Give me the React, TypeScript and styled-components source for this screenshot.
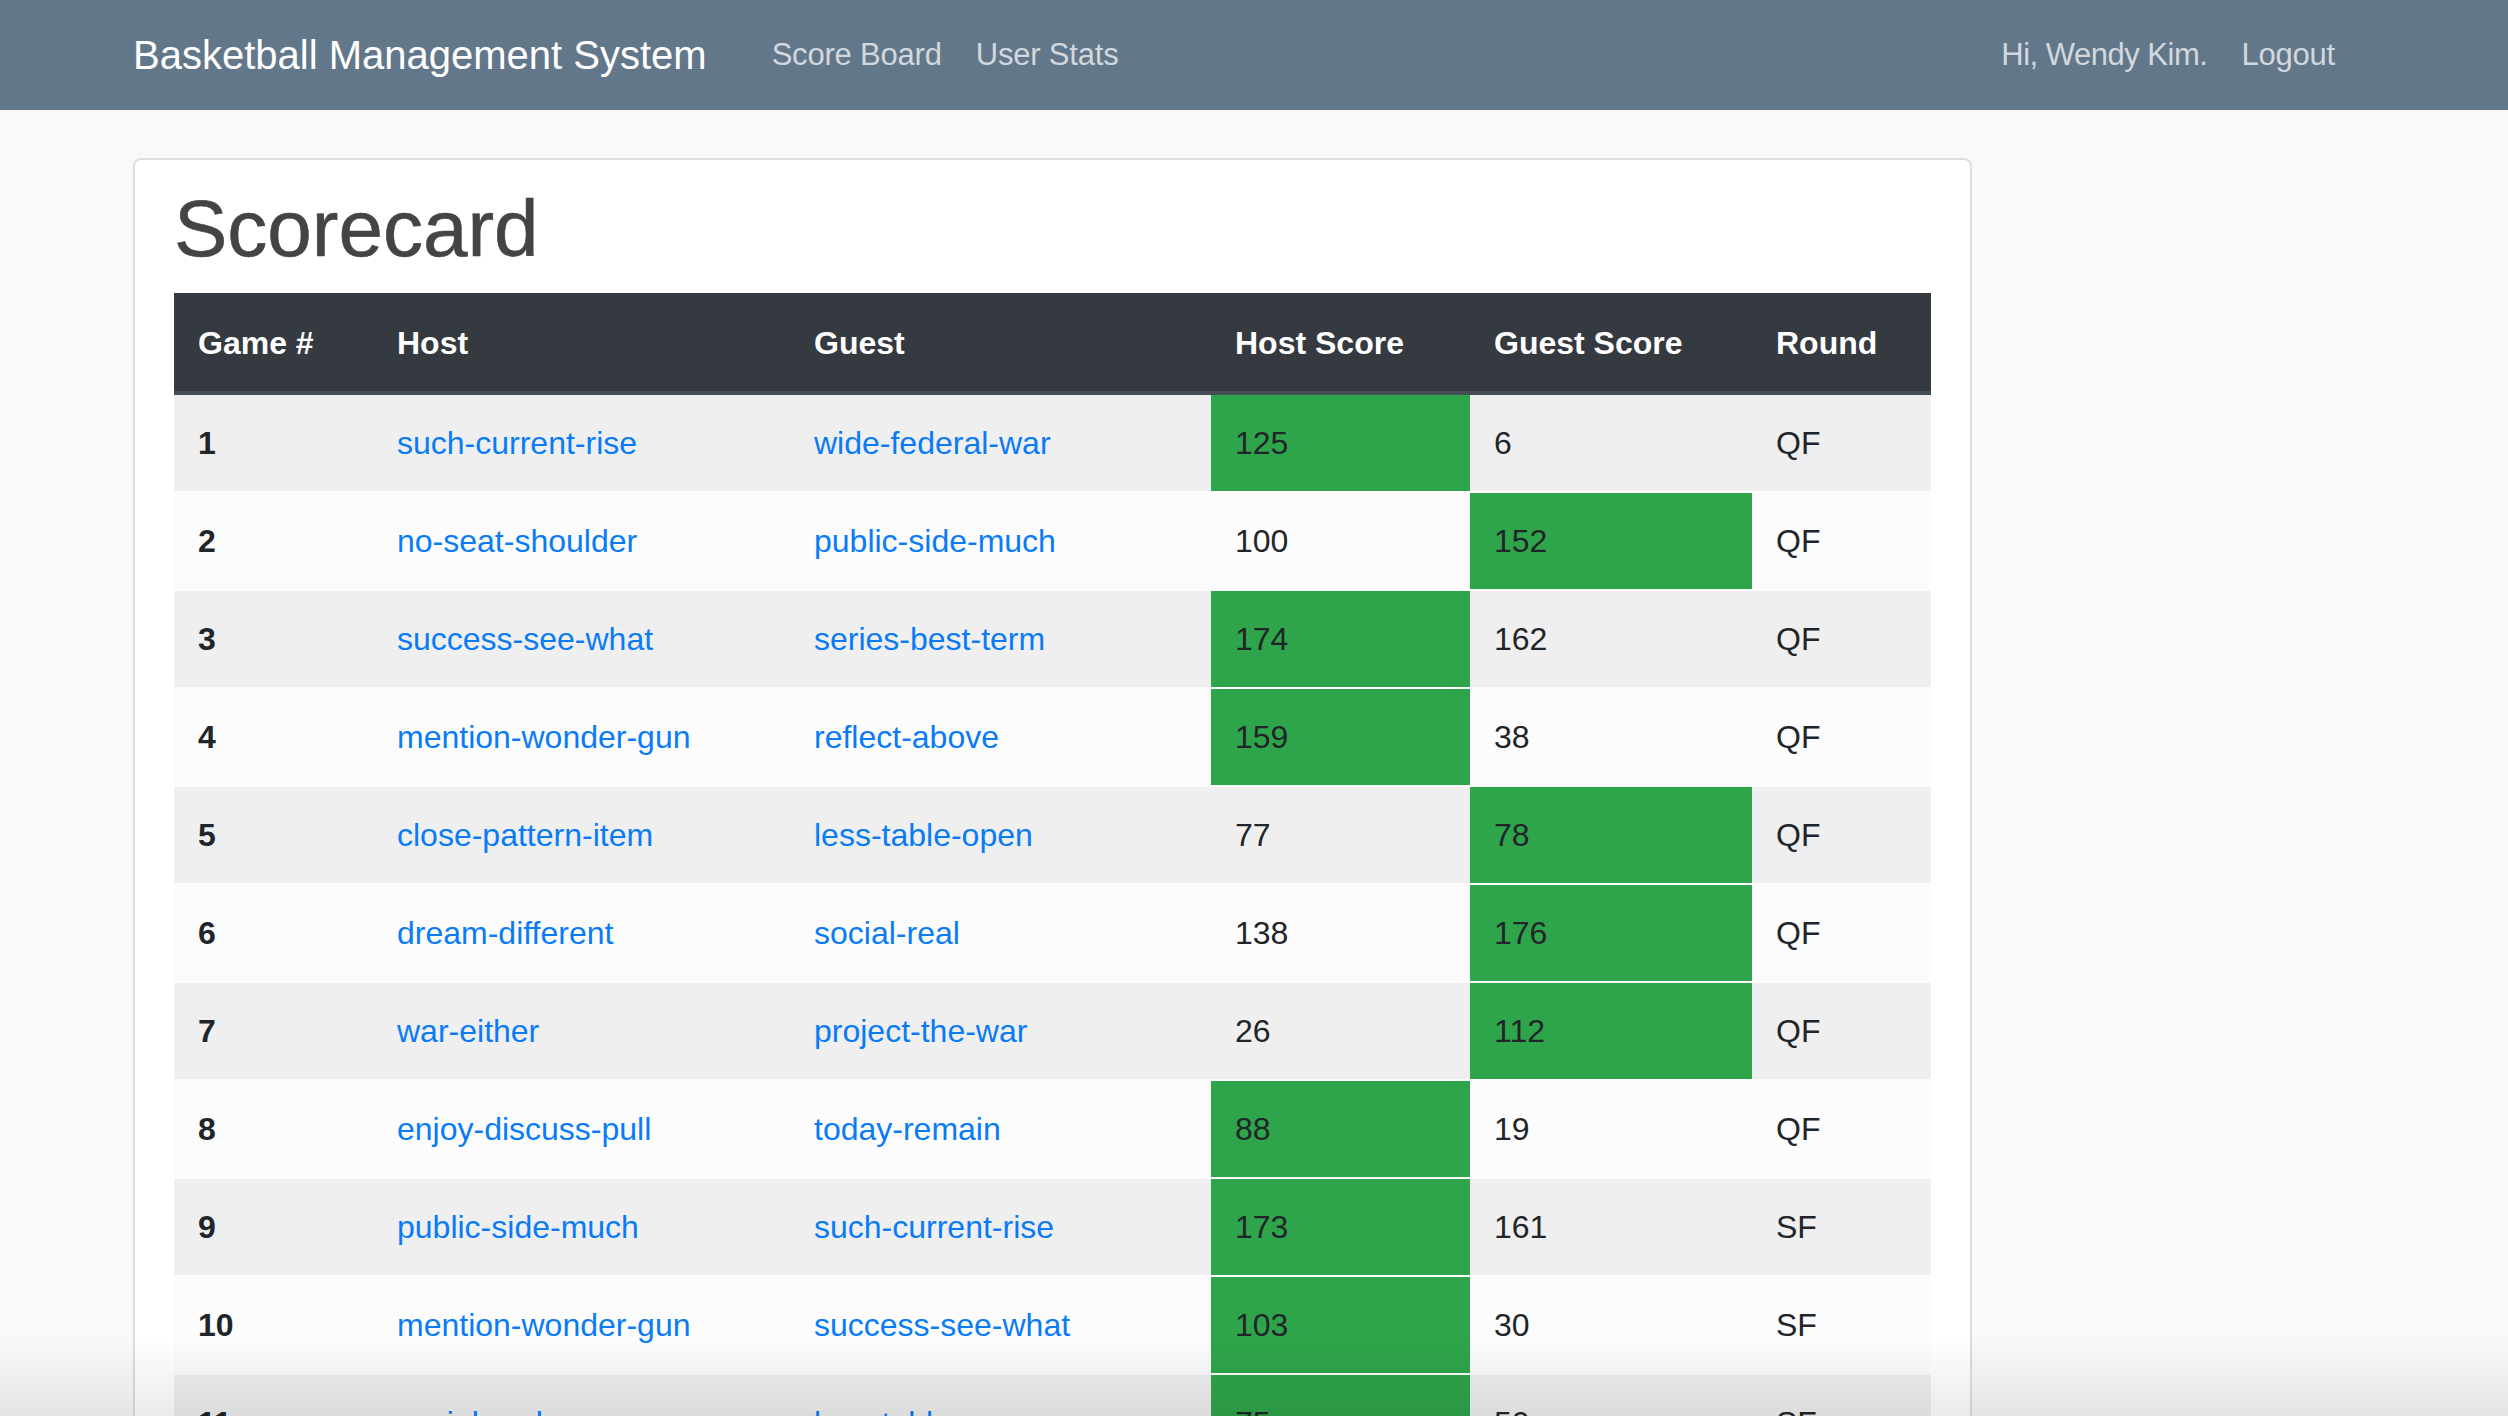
import styled, { createGlobalStyle } from "styled-components";

type Game = {
  id: number;
  host: string;
  guest: string;
  hostScore: number;
  guestScore: number;
  round: string;
};

const games: Game[] = [
  { id: 1, host: "such-current-rise", guest: "wide-federal-war", hostScore: 125, guestScore: 6, round: "QF" },
  { id: 2, host: "no-seat-shoulder", guest: "public-side-much", hostScore: 100, guestScore: 152, round: "QF" },
  { id: 3, host: "success-see-what", guest: "series-best-term", hostScore: 174, guestScore: 162, round: "QF" },
  { id: 4, host: "mention-wonder-gun", guest: "reflect-above", hostScore: 159, guestScore: 38, round: "QF" },
  { id: 5, host: "close-pattern-item", guest: "less-table-open", hostScore: 77, guestScore: 78, round: "QF" },
  { id: 6, host: "dream-different", guest: "social-real", hostScore: 138, guestScore: 176, round: "QF" },
  { id: 7, host: "war-either", guest: "project-the-war", hostScore: 26, guestScore: 112, round: "QF" },
  { id: 8, host: "enjoy-discuss-pull", guest: "today-remain", hostScore: 88, guestScore: 19, round: "QF" },
  { id: 9, host: "public-side-much", guest: "such-current-rise", hostScore: 173, guestScore: 161, round: "SF" },
  { id: 10, host: "mention-wonder-gun", guest: "success-see-what", hostScore: 103, guestScore: 30, round: "SF" },
  { id: 11, host: "social-real", guest: "less-table-open", hostScore: 75, guestScore: 50, round: "SF" },
];

const columns = [
  { label: "Game #", width: 199 },
  { label: "Host", width: 417 },
  { label: "Guest", width: 421 },
  { label: "Host Score", width: 259 },
  { label: "Guest Score", width: 282 },
  { label: "Round", width: 179 },
];

export default function App() {
  return (
    <>
      <GlobalStyle />
      <NavBar>
        <NavLeft>
          <Brand href="#">Basketball Management System</Brand>
          <NavLink href="#">Score Board</NavLink>
          <NavLink href="#">User Stats</NavLink>
        </NavLeft>
        <NavRight>
          <NavText>Hi, Wendy Kim.</NavText>
          <NavLink href="#">Logout</NavLink>
        </NavRight>
      </NavBar>

      <Main>
        <Card>
          <Title>Scorecard</Title>
          <Table>
            <colgroup>
              {columns.map((c) => (
                <col key={c.label} style={{ width: c.width }} />
              ))}
            </colgroup>
            <thead>
              <tr>
                {columns.map((c) => (
                  <HeadCell key={c.label}>{c.label}</HeadCell>
                ))}
              </tr>
            </thead>
            <tbody>
              {games.map((g, i) => (
                <Row key={g.id} $odd={i % 2 === 0}>
                  <NumCell>{g.id}</NumCell>
                  <Cell>
                    <TeamLink href="#">{g.host}</TeamLink>
                  </Cell>
                  <Cell>
                    <TeamLink href="#">{g.guest}</TeamLink>
                  </Cell>
                  <Cell $win={g.hostScore > g.guestScore}>{g.hostScore}</Cell>
                  <Cell $win={g.guestScore > g.hostScore}>{g.guestScore}</Cell>
                  <Cell>{g.round}</Cell>
                </Row>
              ))}
            </tbody>
          </Table>
        </Card>
      </Main>
      <BottomFade />
    </>
  );
}

const GlobalStyle = createGlobalStyle`
  html, body {
    margin: 0;
    padding: 0;
    background: #f9f9f9;
    font-family: "Liberation Sans", Arial, sans-serif;
    color: #212529;
  }
  * {
    box-sizing: border-box;
  }
`;

const NavBar = styled.nav`
  height: 110px;
  background: #627789;
  display: flex;
  align-items: center;
  justify-content: space-between;
  padding: 0 156px 0 133px;
`;

const NavLeft = styled.div`
  display: flex;
  align-items: center;
`;

const NavRight = styled.div`
  display: flex;
  align-items: center;
`;

const Brand = styled.a`
  color: #fff;
  font-size: 40px;
  text-decoration: none;
  margin-right: 48px;
  line-height: 60px;
`;

const NavLink = styled.a`
  color: rgba(255, 255, 255, 0.72);
  font-size: 31px;
  letter-spacing: -0.2px;
  text-decoration: none;
  padding: 0 17px;
  line-height: 48px;
`;

const NavText = styled.span`
  color: rgba(255, 255, 255, 0.72);
  font-size: 31px;
  letter-spacing: -0.5px;
  line-height: 48px;
  padding: 0 17px;
`;

const Main = styled.main`
  padding: 48px 0 0 133px;
`;

const Card = styled.div`
  width: 1839px;
  background: #fff;
  border: 2px solid #dedede;
  border-radius: 8px;
  padding: 21px 39px 40px;
`;

const Title = styled.h1`
  margin: 0 0 16px;
  font-size: 80px;
  font-weight: 500;
  line-height: 96px;
  color: #444;
  -webkit-text-stroke: 0.6px #444;
`;

const Table = styled.table`
  width: 100%;
  table-layout: fixed;
  border-collapse: collapse;
  font-size: 32px;
`;

const HeadCell = styled.th`
  background: #343a40;
  color: #fff;
  text-align: left;
  font-weight: 700;
  padding: 24px;
  line-height: 48px;
  border-top: 2px solid #343a40;
  border-bottom: 4px solid #454d55;
`;

const Row = styled.tr<{ $odd: boolean }>`
  background: ${({ $odd }) => ($odd ? "#efefef" : "#fcfcfc")};
`;

const Cell = styled.td<{ $win?: boolean }>`
  padding: 24px;
  line-height: 48px;
  white-space: nowrap;
  color: #212529;
  border-top: 2px solid #fcfcfc;
  background: ${({ $win }) => ($win ? "#2fa54b" : "transparent")};
`;

const NumCell = styled(Cell)`
  font-weight: 700;
`;

const TeamLink = styled.a`
  color: #0a7bf6;
  text-decoration: none;
`;

const BottomFade = styled.div`
  position: fixed;
  left: 0;
  right: 0;
  bottom: 0;
  height: 80px;
  pointer-events: none;
  background: linear-gradient(to bottom, rgba(0, 0, 0, 0), rgba(0, 0, 0, 0.08));
`;
